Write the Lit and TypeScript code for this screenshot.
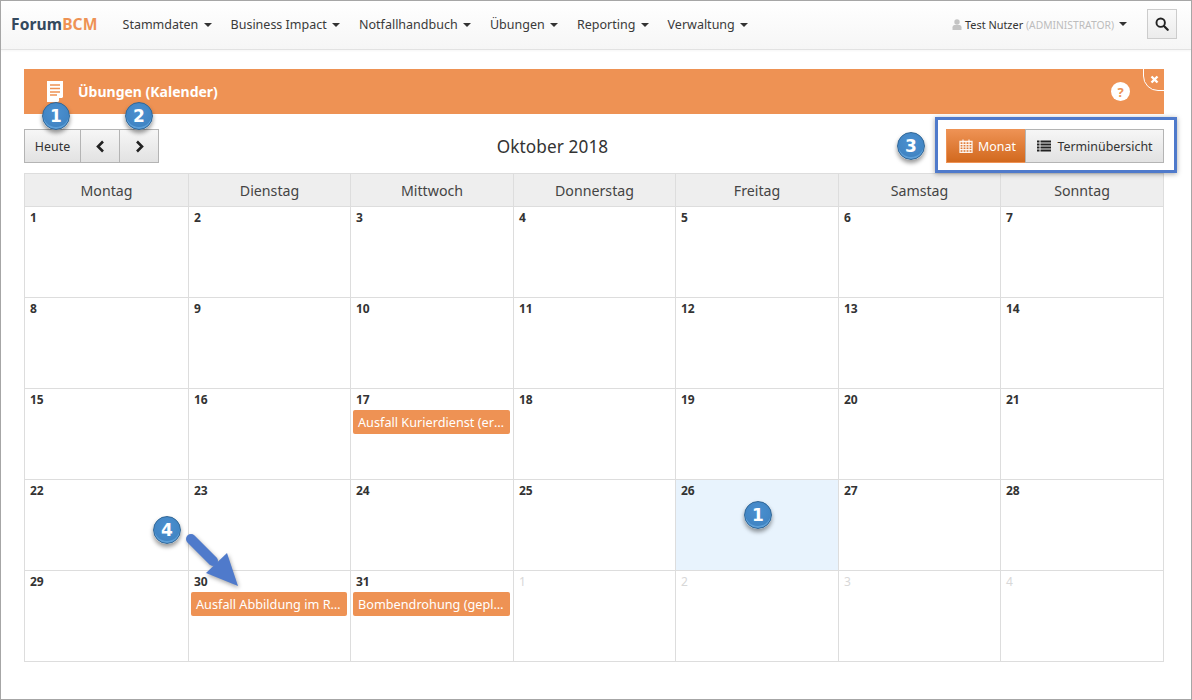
import { LitElement, html, css } from "lit";
import { customElement } from "lit/decorators.js";

const caret = html`<span class="caret"></span>`;
const weeks: [string, boolean, string?][][] = [
  [["1",false],["2",false],["3",false],["4",false],["5",false],["6",false],["7",false]],
  [["8",false],["9",false],["10",false],["11",false],["12",false],["13",false],["14",false]],
  [["15",false],["16",false],["17",false,"Ausfall Kurierdienst (erledigt)"],["18",false],["19",false],["20",false],["21",false]],
  [["22",false],["23",false],["24",false],["25",false],["26",false],["27",false],["28",false]],
  [["29",false],["30",false,"Ausfall Abbildung im Rechenzentrum"],["31",false,"Bombendrohung (geplant)"],["1",true],["2",true],["3",true],["4",true]],
];
const days = ["Montag","Dienstag","Mittwoch","Donnerstag","Freitag","Samstag","Sonntag"];
const menu = ["Stammdaten","Business Impact","Notfallhandbuch","Übungen","Reporting","Verwaltung"];

@customElement("app-root")
export class AppRoot extends LitElement {
  static styles = css`
    :host { display: block; box-sizing: border-box; width: 1192px; height: 700px; position: relative; overflow: hidden; background: #fff; border: 1px solid #a6a6a6; font-family: "Noto Sans", sans-serif; font-size: 13px; color: #333; }
    * { box-sizing: border-box; }
    .nav { height: 49px; display: flex; align-items: center; padding: 0 14px 2px 10px; background: linear-gradient(#fff, #f6f6f6); border-bottom: 1px solid #e2e2e2; box-shadow: 0 1px 2px rgba(0,0,0,.04); }
    .brand { font-size: 15.6px; font-weight: 700; color: #34495e; margin-right: 25px; letter-spacing: .1px; }
    .brand span { color: #ee9254; }
    .menu { display: flex; gap: 19px; }
    .item { color: #3a3a3a; white-space: nowrap; font-size: 12.5px; }
    .caret { display: inline-block; width: 0; height: 0; margin-left: 2px; vertical-align: middle; border-top: 4px solid #333; border-left: 4px solid transparent; border-right: 4px solid transparent; }
    .user { margin-left: auto; display: flex; align-items: center; gap: 3px; font-size: 10.9px; margin-right: 20px; white-space: nowrap; }
    .user .role { color: #bdbdbd; font-size: 10.3px; }
    .search { width: 30px; height: 30px; display: flex; align-items: center; justify-content: center; border: 1px solid #ccc; background: linear-gradient(#fafafa, #ececec); }
    .content { padding: 19px 27px 0 23px; }
    .head { height: 45px; background: #ee9254; color: #fff; display: flex; align-items: center; padding: 0 34px 0 22px; position: relative; overflow: hidden; }
    .head .title { font-weight: 700; font-size: 14px; margin-left: 14px; }
    .head .help { margin-left: auto; width: 19px; height: 19px; border-radius: 50%; background: #fff; color: #ee9254; font-weight: 700; font-size: 13px; display: flex; align-items: center; justify-content: center; }
    .close { position: absolute; right: -1px; top: -1px; width: 22px; height: 23px; border: 1.5px solid #fff; border-bottom-left-radius: 15px; background: #ee9254; display: flex; align-items: center; justify-content: center; }
    .bar { height: 60px; padding-top: 15px; display: flex; justify-content: space-between; align-items: flex-start; }
    .group { display: flex; }
    .btn { height: 34px; border: 1px solid #b4b4b4; margin-left: -1px; background: linear-gradient(#f6f6f6, #e2e2e2); color: #333; display: flex; align-items: center; justify-content: center; gap: 6px; font-size: 12.4px; }
    .btn:first-child { margin-left: 0; }
    .heute { width: 57px; }
    .arrow { width: 40px; }
    .month { font-size: 17.2px; color: #333; padding-top: 6px; letter-spacing: .1px; }
    .monat { width: 80px; background: linear-gradient(#ee9254, #d2691e); border-color: #ee9254; color: #fff; margin: 0; gap: 5px; padding-left: 3px; }
    .term { width: 139px; padding-left: 1px; }
    .cal { display: grid; grid-template-columns: 164px 162px 163px 162px 163px 162px 163px; border-top: 1px solid #ddd; border-left: 1px solid #ddd; margin-top: -1px; }
    .dh { height: 33px; background: #eee; border-right: 1px solid #ddd; border-bottom: 1px solid #ddd; display: flex; align-items: center; justify-content: center; font-size: 14.2px; color: #444; }
    .c { height: 91px; border-right: 1px solid #ddd; border-bottom: 1px solid #ddd; padding: 2px 2px 0 2px; font-size: 12px; font-weight: 700; color: #333; min-width: 0; }
    .c .n { padding-left: 3px; height: 17px; line-height: 17px; }
    .c.o { font-weight: 400; color: #d8d8d8; }
    .c.today { background: #e8f3fd; }
    .ev { height: 24px; line-height: 24px; background: #ee9254; color: #fff; font-weight: 400; font-size: 12.7px; border-radius: 2px; padding: 0 5px; margin-right: 1px; white-space: nowrap; overflow: hidden; text-overflow: ellipsis; margin-top: 2px; }
    .badge { position: absolute; width: 28px; height: 28px; border-radius: 50%; background: radial-gradient(circle at 50% 35%, #4b90d0, #3c7fbd); border: 1px solid #2f6595; box-shadow: 0 3px 4px rgba(0,0,0,.4), inset 0 -2px 0 #5d9fd8; color: #fff; font-weight: 700; font-size: 17px; display: flex; align-items: center; justify-content: center; line-height: 1; font-family: "DejaVu Sans", sans-serif; }
    .hl { position: absolute; left: 934px; top: 116px; width: 242px; height: 56px; border: 3px solid #4f7acb; box-shadow: 0 1px 5px rgba(0,0,0,.35); }
    .arrowline { position: absolute; left: 184px; top: 533px; filter: drop-shadow(1px 2px 2px rgba(0,0,0,.35)); }
  `;

  render() {
    return html`
      <div class="nav">
        <div class="brand">Forum<span>BCM</span></div>
        <div class="menu">${menu.map((m) => html`<div class="item">${m} ${caret}</div>`)}</div>
        <div class="user">
          <svg width="10" height="11" viewBox="0 0 10 11"><circle cx="5" cy="3" r="2.700" fill="#c4c4c4"/><path d="M.5 11V8.200C.5 6.600 2 6 3 6h4c1 0 2.500.6 2.500 2.200V11z" fill="#c4c4c4"/></svg>
          <span>Test Nutzer <span class="role">(ADMINISTRATOR)</span></span> ${caret}
        </div>
        <div class="search">
          <svg width="14" height="14" viewBox="0 0 16 16"><circle cx="6.500" cy="6.500" r="4.800" fill="none" stroke="#222" stroke-width="2.200"/><path d="M10.500 10.500l4 4" stroke="#222" stroke-width="2.600" stroke-linecap="round"/></svg>
        </div>
      </div>
      <div class="content">
        <div class="head">
          <svg width="18" height="21" viewBox="0 0 18 21"><path d="M1 0h16v16l-5 5H1z" fill="#fff"/><path d="M4 4h10M4 7.500h10M4 11h10M4 14h7" stroke="#ee9254" stroke-width="1.300"/><path d="M13 17h4l-4 4z" fill="#ee9254"/></svg>
          <div class="title">Übungen (Kalender)</div>
          <div class="help">?</div>
          <div class="close">
            <svg width="9" height="9" viewBox="0 0 9 9"><path d="M1.500 1.500l6 6M7.500 1.500l-6 6" stroke="#fff" stroke-width="2.400"/></svg>
          </div>
        </div>
        <div class="bar">
          <div class="group">
            <div class="btn heute">Heute</div>
            <div class="btn arrow"><svg width="11" height="13" viewBox="0 0 11 13"><path d="M8 1.500L3 6.500l5 5" fill="none" stroke="#222" stroke-width="2.600"/></svg></div>
            <div class="btn arrow"><svg width="11" height="13" viewBox="0 0 11 13"><path d="M3 1.500l5 5-5 5" fill="none" stroke="#222" stroke-width="2.600"/></svg></div>
          </div>
          <div class="month">Oktober 2018</div>
          <div class="group">
            <div class="btn monat">
              <svg width="14" height="14" viewBox="0 0 14 14"><path d="M1 2.500h12v11H1z" fill="none" stroke="#fff" stroke-opacity=".9" stroke-width="1.300"/><path d="M1 5.500h12M1 8h12M1 10.700h12M4 2.500v11M7 2.500v11M10 2.500v11M4 .5v3M10 .5v3" stroke="#fff" stroke-opacity=".9" stroke-width="1.200"/></svg>
              Monat
            </div>
            <div class="btn term">
              <svg width="14" height="12" viewBox="0 0 14 12"><path d="M0 1.500h2.500M0 4.500h2.500M0 7.500h2.500M0 10.500h2.500M3.500 1.500H14M3.500 4.500H14M3.500 7.500H14M3.500 10.500H14" stroke="#222" stroke-width="2"/></svg>
              Terminübersicht
            </div>
          </div>
        </div>
        <div class="cal">
          ${days.map((d) => html`<div class="dh">${d}</div>`)}
          ${weeks.flat().map(([n, other, ev]) => html`
            <div class="c ${other ? "o" : ""} ${n === "26" ? "today" : ""}">
              <div class="n">${n}</div>
              ${ev ? html`<div class="ev">${ev}</div>` : ""}
            </div>`)}
        </div>
      </div>
      <div class="badge" style="left:41px;top:101px">1</div>
      <div class="badge" style="left:124px;top:101px">2</div>
      <div class="badge" style="left:896px;top:131px">3</div>
      <div class="badge" style="left:152px;top:515px">4</div>
      <div class="badge" style="left:743px;top:500px">1</div>
      <div class="hl"></div>
      <svg class="arrowline" width="60" height="58" viewBox="0 0 60 58">
        <path d="M6 5L28 27" stroke="#4f7acb" stroke-width="10" stroke-linecap="round"/>
        <path d="M42 19L53 52 21 39z" fill="#4f7acb"/>
      </svg>
    `;
  }
}
